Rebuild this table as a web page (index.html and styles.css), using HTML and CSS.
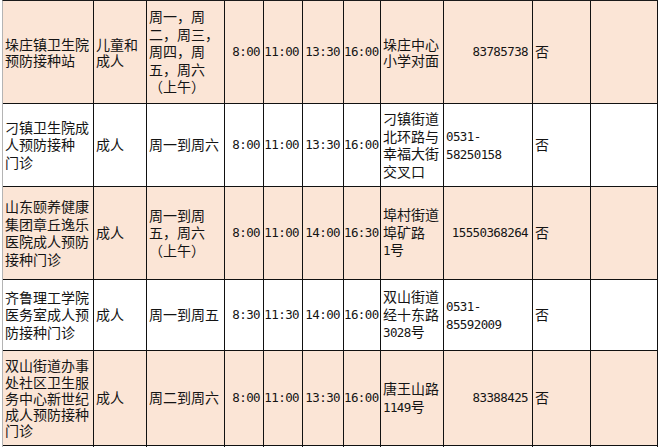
FILE: index.html
```html
<!DOCTYPE html>
<html lang="zh">
<head>
<meta charset="utf-8">
<title>预防接种门诊</title>
<link rel="stylesheet" href="styles.css">
</head>
<body>
<table class="sheet">
  <colgroup>
    <col class="c-name"><col class="c-who"><col class="c-days"><col class="c-t1"><col class="c-t2"><col class="c-t3"><col class="c-t4"><col class="c-addr"><col class="c-tel"><col class="c-no"><col class="c-extra">
  </colgroup>
  <tbody>
    <tr class="row shade r1">
      <td class="two">垛庄镇卫生院<br>预防接种站</td>
      <td class="two">儿童和<br>成人</td>
      <td>周一，周<br>二，周三，<br>周四，周<br>五，周六<br>（上午）</td>
      <td class="num">8:00</td>
      <td class="num">11:00</td>
      <td class="num">13:30</td>
      <td class="num">16:00</td>
      <td class="two">垛庄中心<br>小学对面</td>
      <td class="num tel">83785738</td>
      <td>否</td>
      <td></td>
    </tr>
    <tr class="row r2">
      <td>刁镇卫生院成<br>人预防接种<br>门诊</td>
      <td>成人</td>
      <td>周一到周六</td>
      <td class="num">8:00</td>
      <td class="num">11:00</td>
      <td class="num">13:30</td>
      <td class="num">16:00</td>
      <td>刁镇街道<br>北环路与<br>幸福大街<br>交叉口</td>
      <td><span class="d">0531-</span><br><span class="d">58250158</span></td>
      <td>否</td>
      <td></td>
    </tr>
    <tr class="row shade r3">
      <td>山东颐养健康<br>集团章丘逸乐<br>医院成人预防<br>接种门诊</td>
      <td>成人</td>
      <td>周一到周<br>五，周六<br>（上午）</td>
      <td class="num">8:00</td>
      <td class="num">11:00</td>
      <td class="num">14:00</td>
      <td class="num">16:30</td>
      <td>埠村街道<br>埠矿路<br><span class="d">1</span>号</td>
      <td class="num tel">15550368264</td>
      <td>否</td>
      <td></td>
    </tr>
    <tr class="row r4">
      <td>齐鲁理工学院<br>医务室成人预<br>防接种门诊</td>
      <td>成人</td>
      <td>周一到周五</td>
      <td class="num">8:30</td>
      <td class="num">11:30</td>
      <td class="num">14:00</td>
      <td class="num">16:00</td>
      <td>双山街道<br>经十东路<br><span class="d">3028</span>号</td>
      <td><span class="d">0531-</span><br><span class="d">85592009</span></td>
      <td>否</td>
      <td></td>
    </tr>
    <tr class="row shade r5">
      <td class="tight">双山街道办事<br>处社区卫生服<br>务中心新世纪<br>成人预防接种<br>门诊</td>
      <td>成人</td>
      <td>周二到周六</td>
      <td class="num">8:00</td>
      <td class="num">11:00</td>
      <td class="num">13:30</td>
      <td class="num">16:00</td>
      <td>唐王山路<br><span class="d">1149</span>号</td>
      <td class="num tel">83388425</td>
      <td>否</td>
      <td></td>
    </tr>
    <tr class="row r6">
      <td></td><td></td><td></td><td></td><td></td><td></td><td></td><td></td><td></td><td></td><td></td>
    </tr>
  </tbody>
</table>
</body>
</html>
```

FILE: styles.css
```css
html, body {
  margin: 0;
  padding: 0;
  background: #ffffff;
}

.sheet {
  margin-left: 2px;
  border-collapse: separate;
  border-spacing: 0;
  table-layout: fixed;
  width: 656px;
  border-left: 1px solid #b4b4b4;
  border-top: 1px solid #1a1a1a;
  font-family: "Noto Sans CJK SC", "Noto Sans", sans-serif;
  font-size: 14px;
  line-height: 17.5px;
  color: #141414;
}

.c-name { width: 91px; }
.c-who { width: 53px; }
.c-days { width: 78px; }
.c-t1 { width: 39px; }
.c-t2 { width: 39px; }
.c-t3 { width: 41px; }
.c-t4 { width: 37px; }
.c-addr { width: 63px; }
.c-tel { width: 89px; }
.c-no { width: 58px; }
.c-extra { width: 67px; }

.sheet td {
  box-sizing: border-box;
  border-right: 1px solid #111111;
  border-bottom: 1px solid #111111;
  padding: 0 2px;
  vertical-align: middle;
  text-align: left;
  white-space: nowrap;
  overflow: hidden;
}

.shade td {
  background: #fbe5d6;
}

.r1 { height: 103px; }
.r2 { height: 83px; }
.r3 { height: 93px; }
.r4 { height: 71px; }
.r5 { height: 95px; }
.r6 { height: 20px; }

.sheet td.num {
  text-align: right;
  padding-right: 3px;
  padding-left: 0;
}

.sheet td.tel {
  padding-right: 4px;
}

.num,
.d {
  font-family: "DejaVu Sans Mono", "Liberation Mono", monospace;
  font-size: 12.5px;
  letter-spacing: -0.6px;
}

.sheet td.two {
  line-height: 16.5px;
}

.sheet td.tight {
  line-height: 16.3px;
}
```
